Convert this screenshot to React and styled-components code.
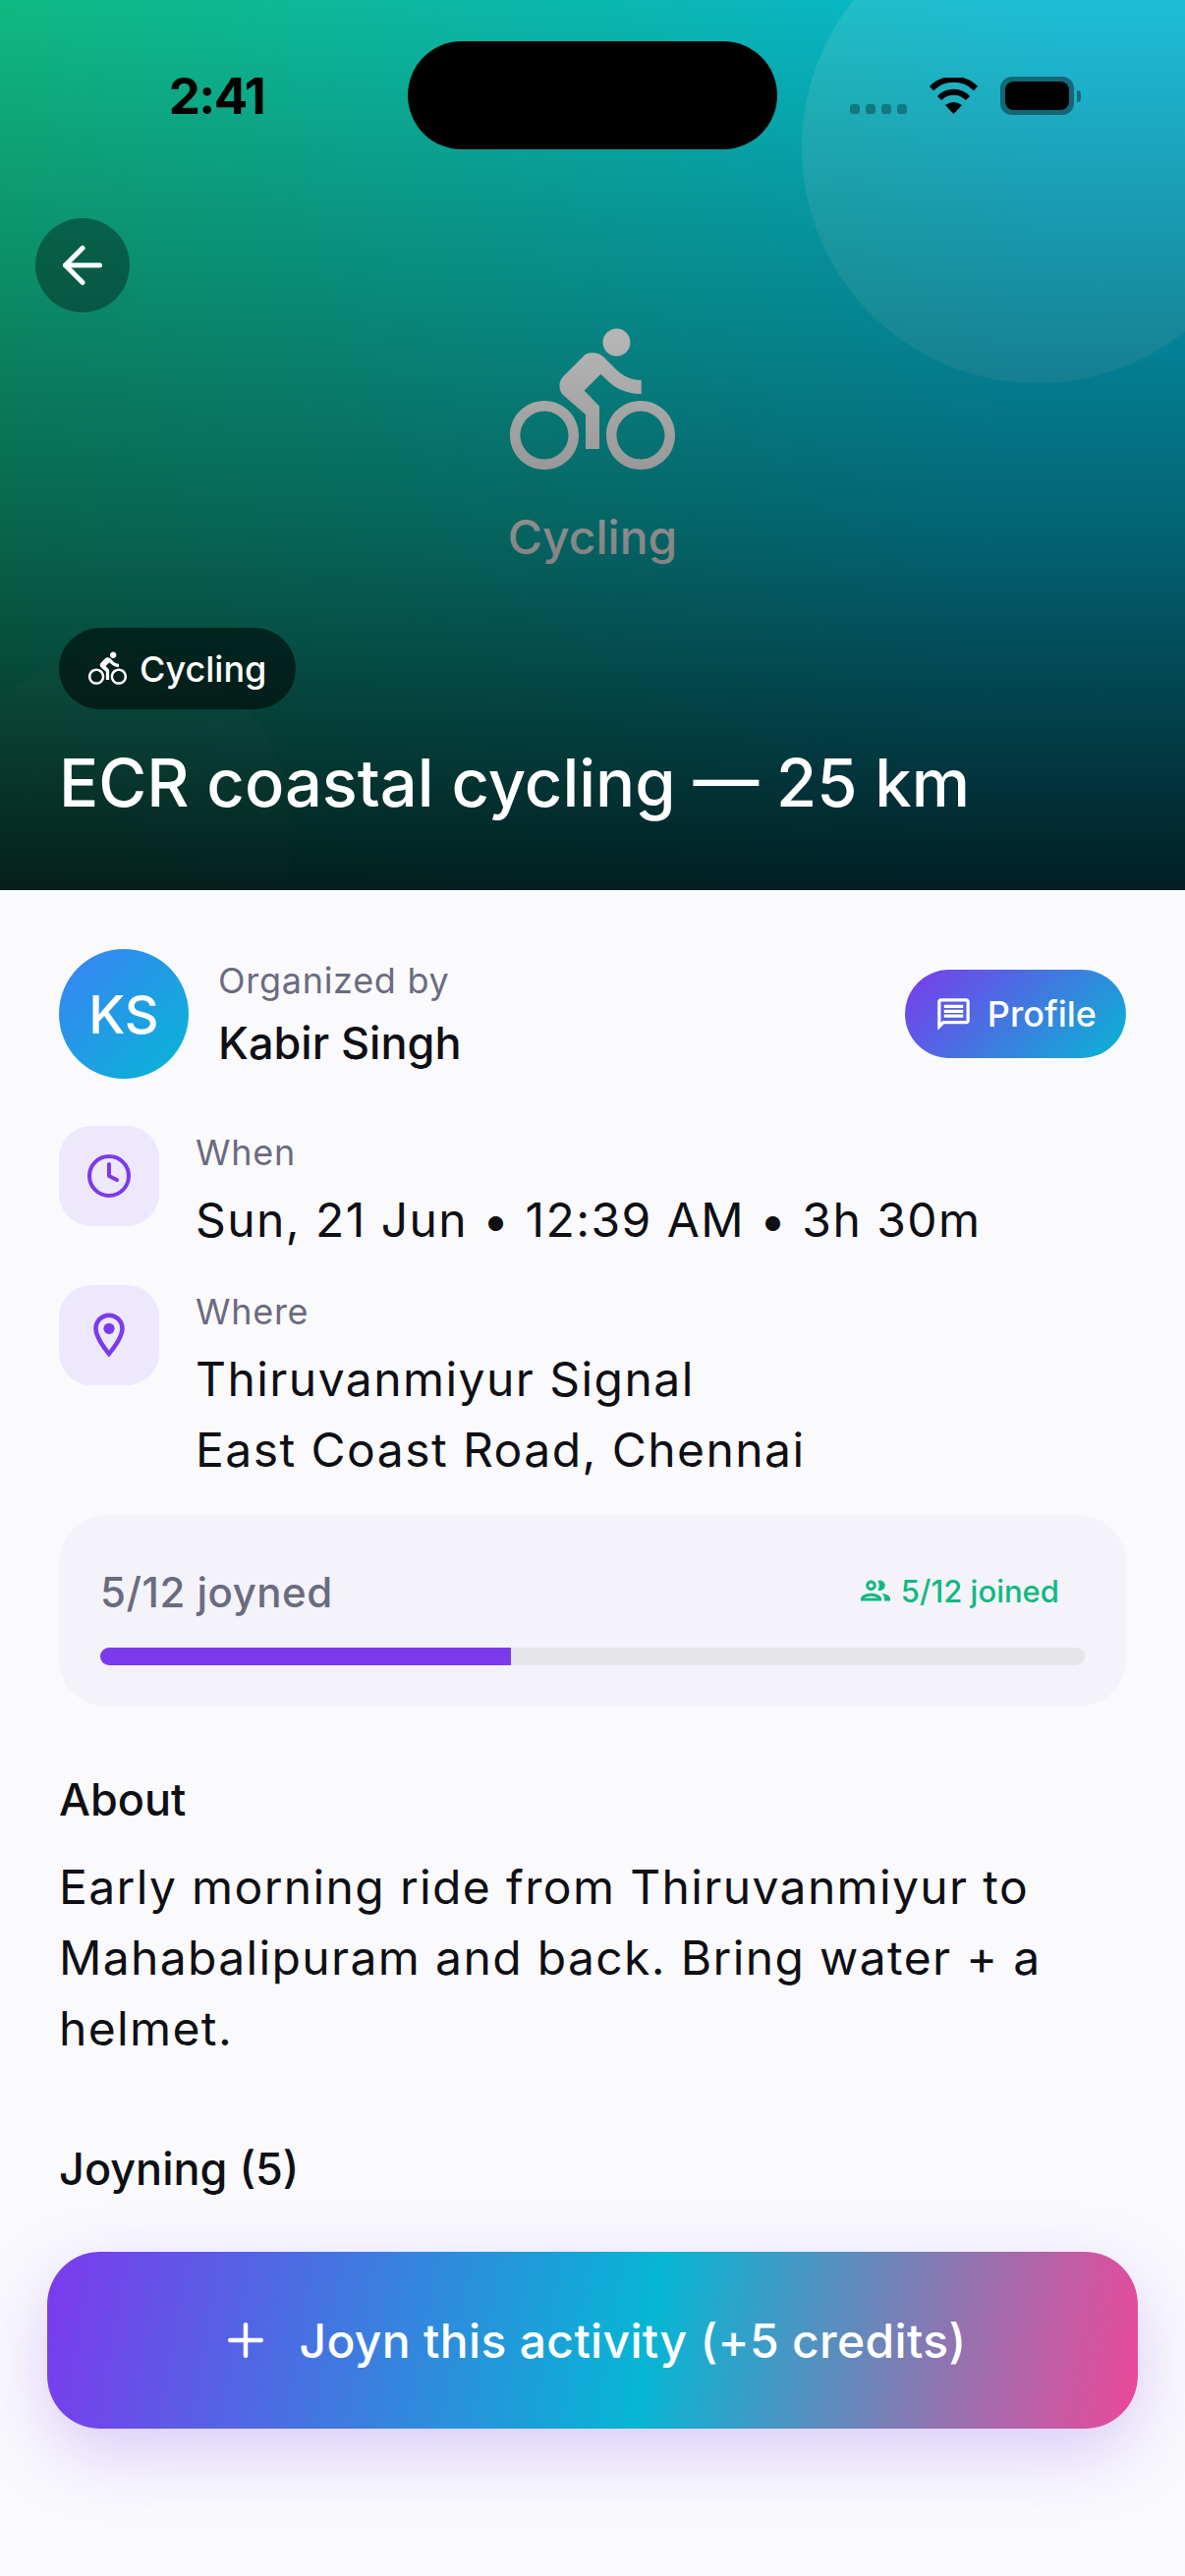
import React from "react";
import styled, { createGlobalStyle } from "styled-components";
import { ArrowLeft, Clock, Plus } from "lucide-react";
import { MdDirectionsBike, MdOutlineMessage, MdOutlineGroup } from "react-icons/md";

const GlobalStyle = createGlobalStyle`
  html, body {
    margin: 0;
    padding: 0;
    background: #fafafd;
  }
  * {
    box-sizing: border-box;
  }
`;

const Screen = styled.div`
  position: relative;
  width: 1206px;
  height: 2622px;
  overflow: hidden;
  background: #fafafd;
  font-family: Inter, "Liberation Sans", sans-serif;
  color: #0f0f14;
`;

const Hero = styled.header`
  position: relative;
  display: flex;
  flex-direction: column;
  height: 906px;
  overflow: hidden;
  background: linear-gradient(100deg, #10b981 0%, #06b6d4 80%, #06b6d4 100%);
`;

const Bubble = styled.div`
  position: absolute;
  width: ${(p) => p.$size}px;
  height: ${(p) => p.$size}px;
  border-radius: 50%;
  background: rgba(255, 255, 255, ${(p) => p.$alpha});
  ${(p) => p.$pos}
`;

const Shade = styled.div`
  position: absolute;
  inset: 0;
  background: linear-gradient(
    180deg,
    rgba(0, 0, 0, 0) 0%,
    rgba(0, 0, 0, 0.46) 60%,
    rgba(0, 0, 0, 0.83) 100%
  );
`;

const StatusBar = styled.div`
  position: relative;
  z-index: 3;
  display: grid;
  grid-template-columns: 415px 376px 1fr;
  height: 152px;
  padding-top: 42px;
`;

const Time = styled.div`
  align-self: start;
  margin-top: 28px;
  padding-left: 26px;
  text-align: center;
  font-size: 51px;
  line-height: 56px;
  font-weight: 700;
  letter-spacing: -1.5px;
  color: #000;
`;

const Island = styled.div`
  height: 110px;
  border-radius: 55px;
  background: #000;
`;

const StatusIcons = styled.div`
  position: relative;
  display: flex;
  align-items: flex-start;
  padding-left: 74px;
`;

const Dots = styled.div`
  display: flex;
  gap: 6px;
  margin-top: 64px;
`;

const Dot = styled.span`
  width: 10px;
  height: 10px;
  border-radius: 3px;
  background: rgba(0, 0, 0, 0.3);
`;

const Wifi = styled.svg`
  width: 51px;
  height: 37px;
  margin: 37px 0 0 22px;
`;

const Battery = styled.div`
  display: flex;
  align-items: center;
  width: 75px;
  height: 39px;
  margin: 36px 0 0 22px;
  padding: 0;
  border: 5px solid rgba(0, 0, 0, 0.4);
  border-radius: 12px;
`;

const BatteryFill = styled.div`
  width: 100%;
  height: 100%;
  border-radius: 8px;
  background: #000;
`;

const BatteryNub = styled.div`
  width: 4px;
  height: 12px;
  margin: 50px 0 0 3px;
  border-radius: 0 4px 4px 0;
  background: rgba(0, 0, 0, 0.4);
`;

const BackButton = styled.button`
  position: relative;
  z-index: 2;
  display: flex;
  align-items: center;
  justify-content: center;
  width: 96px;
  height: 96px;
  margin: 70px 0 0 36px;
  padding: 0;
  border: 0;
  border-radius: 50%;
  background: rgba(0, 0, 0, 0.35);
  color: #fff;
`;

const Sport = styled.div`
  display: flex;
  flex-direction: column;
  align-items: center;
  margin-top: 6px;
  color: #fff;
`;

const SportName = styled.div`
  margin-top: 19px;
  font-size: 48px;
  line-height: 72px;
  font-weight: 500;
`;

const HeroFoot = styled.div`
  position: relative;
  z-index: 2;
  display: flex;
  flex-direction: column;
  align-items: flex-start;
  margin-top: auto;
  padding: 0 60px 67px;
`;

const Chip = styled.div`
  display: flex;
  align-items: center;
  gap: 13px;
  height: 83px;
  padding: 0 30px;
  border-radius: 42px;
  background: rgba(0, 0, 0, 0.55);
  color: #fff;
  font-size: 36px;
  font-weight: 500;
`;

const Title = styled.h1`
  margin: 33px 0 0;
  font-size: 66.8px;
  line-height: 84px;
  font-weight: 500;
  color: #fff;
`;

const Body = styled.main`
  display: flex;
  flex-direction: column;
  padding: 60px 60px 0;
`;

const OrganizerRow = styled.div`
  display: flex;
  align-items: center;
  margin-bottom: 48px;
`;

const Avatar = styled.div`
  display: flex;
  align-items: center;
  justify-content: center;
  flex: none;
  width: 132px;
  height: 132px;
  border-radius: 50%;
  background: linear-gradient(135deg, #3b82f6, #06b6d4);
  color: #fff;
  font-size: 54px;
  font-weight: 500;
`;

const OrganizerText = styled.div`
  flex: 1;
  margin-left: 30px;
  padding-top: 2px;
`;

const SmallLabel = styled.div`
  font-size: 36px;
  line-height: 54px;
  letter-spacing: 0.72px;
  color: #6b6b80;
`;

const OrganizerName = styled.div`
  margin-top: 4px;
  font-size: 45px;
  line-height: 66px;
  font-weight: 500;
`;

const ProfileButton = styled.button`
  display: flex;
  align-items: center;
  gap: 15px;
  height: 90px;
  padding: 0 30px;
  border: 0;
  border-radius: 45px;
  background: linear-gradient(135deg, #7c3aed, #06b6d4);
  color: #fff;
  font-family: inherit;
  font-size: 36px;
  font-weight: 500;
`;

const InfoRow = styled.div`
  display: flex;
  gap: 37px;
  margin-bottom: 30px;
`;

const IconTile = styled.div`
  display: flex;
  align-items: center;
  justify-content: center;
  flex: none;
  width: 102px;
  height: 102px;
  border-radius: 33px;
  background: #ede8fc;
  color: #7c3aed;
`;

const InfoText = styled.div`
  font-size: 48px;
  line-height: 72px;
  letter-spacing: 1.44px;
`;

const InfoLabel = styled(SmallLabel)`
  margin-bottom: 6px;
`;

const StatsCard = styled.section`
  padding: 42px;
  border-radius: 48px;
  background: #f4f3f9;
`;

const StatsHead = styled.div`
  display: flex;
  align-items: center;
  justify-content: space-between;
  height: 72px;
  margin-bottom: 21px;
`;

const StatsLabel = styled.div`
  font-size: 42px;
  font-weight: 500;
  letter-spacing: 0.5px;
  color: #6b6b80;
`;

const JoinedNote = styled.div`
  display: flex;
  align-items: center;
  gap: 8px;
  padding: 0 26px 2px 0;
  font-size: 31px;
  font-weight: 500;
  color: #10b981;
`;

const Track = styled.div`
  height: 18px;
  overflow: hidden;
  border-radius: 9px;
  background: #e5e5ea;
`;

const Fill = styled.div`
  height: 100%;
  background: #7c3aed;
`;

const SectionTitle = styled.h2`
  margin: ${(p) => p.$top}px 0 0;
  font-size: 45px;
  line-height: 60px;
  font-weight: 500;
`;

const AboutText = styled.p`
  margin: 23px 0 0;
  font-size: 48px;
  line-height: 72px;
  letter-spacing: 1.36px;
`;

const Footer = styled.div`
  position: absolute;
  left: 0;
  right: 0;
  bottom: 0;
  padding: 30px 48px 150px;
  background: linear-gradient(180deg, rgba(250, 250, 253, 0) 0%, #fafafd 24%);
`;

const JoinButton = styled.button`
  display: flex;
  align-items: center;
  justify-content: center;
  gap: 28px;
  width: 100%;
  height: 180px;
  border: 0;
  border-radius: 54px;
  background: linear-gradient(100deg, #7c3aed 0%, #06b6d4 55%, #ec4899 100%);
  box-shadow: 0 24px 72px rgba(124, 58, 237, 0.25);
  color: #fff;
  font-family: inherit;
  font-size: 48px;
  font-weight: 500;
  letter-spacing: 0.33px;
`;

const PlaceIcon = ({ size }) => (
  <svg width={size} height={size} viewBox="0 0 24 24" fill="currentColor">
    <path d="M12 2C8.13 2 5 5.13 5 9c0 5.25 7 13 7 13s7-7.75 7-13c0-3.87-3.13-7-7-7zM7 9c0-2.76 2.24-5 5-5s5 2.24 5 5c0 2.88-2.88 7.19-5 9.88C9.92 16.21 7 11.85 7 9z" />
    <circle cx="12" cy="9" r="2.5" />
  </svg>
);

const App = () => {
  return (
    <Screen>
      <GlobalStyle />
      <Hero>
        <Bubble $size={480} $alpha={0.1} $pos="top: -90px; right: -90px;" />
        <Bubble $size={360} $alpha={0.05} $pos="bottom: -120px; left: -60px;" />
        <Shade />
        <StatusBar>
          <Time>2:41</Time>
          <Island />
          <StatusIcons>
            <Dots>
              <Dot />
              <Dot />
              <Dot />
              <Dot />
            </Dots>
            <Wifi viewBox="0 0 51 37">
              <path d="M3 11A32 32 0 0 1 48 11" fill="none" stroke="#000" strokeWidth="6" />
              <path d="M11 21A20 20 0 0 1 40 21" fill="none" stroke="#000" strokeWidth="6" />
              <path d="M25.5 37L17 28Q25.5 22 34 28Z" fill="#000" />
            </Wifi>
            <Battery>
              <BatteryFill />
            </Battery>
            <BatteryNub />
          </StatusIcons>
        </StatusBar>
        <BackButton>
          <ArrowLeft size={60} strokeWidth={2} />
        </BackButton>
        <Sport>
          <MdDirectionsBike size={168} />
          <SportName>Cycling</SportName>
        </Sport>
        <HeroFoot>
          <Chip>
            <MdDirectionsBike size={39} />
            Cycling
          </Chip>
          <Title>ECR coastal cycling — 25 km</Title>
        </HeroFoot>
      </Hero>
      <Body>
        <OrganizerRow>
          <Avatar>KS</Avatar>
          <OrganizerText>
            <SmallLabel>Organized by</SmallLabel>
            <OrganizerName>Kabir Singh</OrganizerName>
          </OrganizerText>
          <ProfileButton>
            <MdOutlineMessage size={39} />
            Profile
          </ProfileButton>
        </OrganizerRow>
        <InfoRow>
          <IconTile>
            <Clock size={48} strokeWidth={2} />
          </IconTile>
          <div>
            <InfoLabel>When</InfoLabel>
            <InfoText>Sun, 21 Jun • 12:39 AM • 3h 30m</InfoText>
          </div>
        </InfoRow>
        <InfoRow>
          <IconTile>
            <PlaceIcon size={54} />
          </IconTile>
          <div>
            <InfoLabel>Where</InfoLabel>
            <InfoText>
              Thiruvanmiyur Signal
              <br />
              East Coast Road, Chennai
            </InfoText>
          </div>
        </InfoRow>
        <StatsCard>
          <StatsHead>
            <StatsLabel>5/12 joyned</StatsLabel>
            <JoinedNote>
              <MdOutlineGroup size={36} />
              5/12 joined
            </JoinedNote>
          </StatsHead>
          <Track>
            <Fill style={{ width: `${(5 / 12) * 100}%` }} />
          </Track>
        </StatsCard>
        <SectionTitle $top={65}>About</SectionTitle>
        <AboutText>
          Early morning ride from Thiruvanmiyur to Mahabalipuram and back. Bring water + a helmet.
        </AboutText>
        <SectionTitle $top={77}>Joyning (5)</SectionTitle>
      </Body>
      <Footer>
        <JoinButton>
          <Plus size={54} strokeWidth={2} />
          Joyn this activity (+5 credits)
        </JoinButton>
      </Footer>
    </Screen>
  );
};

export default App;
